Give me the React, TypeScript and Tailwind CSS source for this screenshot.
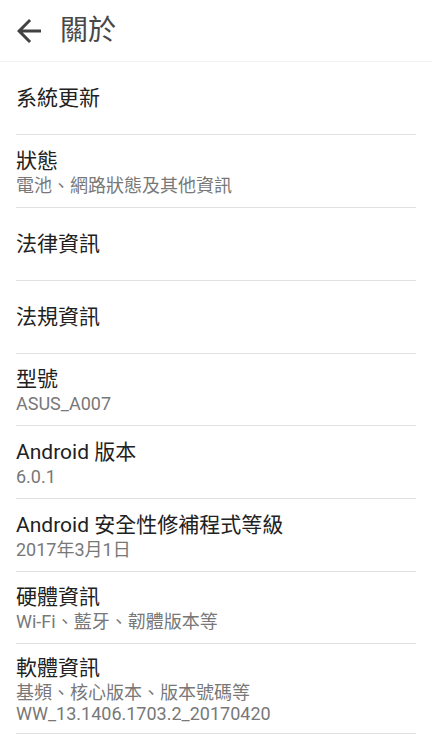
import React from "react";

const font = { fontFamily: "Roboto, 'Noto Sans CJK TC', 'Noto Sans', sans-serif" };

type Item = { title: string; subs?: string[]; h: string };

const items: Item[] = [
  { title: "系統更新", h: "h-[73px]" },
  { title: "狀態", subs: ["電池、網路狀態及其他資訊"], h: "h-[73px]" },
  { title: "法律資訊", h: "h-[73px]" },
  { title: "法規資訊", h: "h-[73px]" },
  { title: "型號", subs: ["ASUS_A007"], h: "h-[72px]" },
  { title: "Android 版本", subs: ["6.0.1"], h: "h-[73px]" },
  { title: "Android 安全性修補程式等級", subs: ["2017年3月1日"], h: "h-[73px]" },
  { title: "硬體資訊", subs: ["Wi-Fi、藍牙、韌體版本等"], h: "h-[72px]" },
  {
    title: "軟體資訊",
    subs: ["基頻、核心版本、版本號碼等", "WW_13.1406.1703.2_20170420"],
    h: "h-[90px]",
  },
];

function Row({ item }: { item: Item }) {
  return (
    <div className={"mx-4 border-b border-[#e0e0e0] flex flex-col justify-center " + item.h}>
      <div className="text-[21px] leading-[28px] text-[#212121]">{item.title}</div>
      {item.subs &&
        item.subs.map((s, i) => (
          <div key={i} className="text-[18px] leading-[20px] text-[#787878] mt-[1px]">
            {s}
          </div>
        ))}
    </div>
  );
}

export default function App() {
  return (
    <div className="w-[432px] h-[735px] bg-white overflow-hidden" style={font}>
      <div className="h-[62px] flex items-center border-b border-[#f2f2f2]">
        <div className="w-[60px] flex items-center pl-[11px]">
          <svg width="36" height="36" viewBox="0 0 24 24">
            <path
              d="M20 11H7.83l5.59-5.59L12 4l-8 8 8 8 1.41-1.41L7.83 13H20v-2z"
              fill="#424242"
            />
          </svg>
        </div>
        <div className="text-[28px] text-[#484848] leading-none">關於</div>
      </div>
      {items.map((it, i) => (
        <Row key={i} item={it} />
      ))}
    </div>
  );
}
